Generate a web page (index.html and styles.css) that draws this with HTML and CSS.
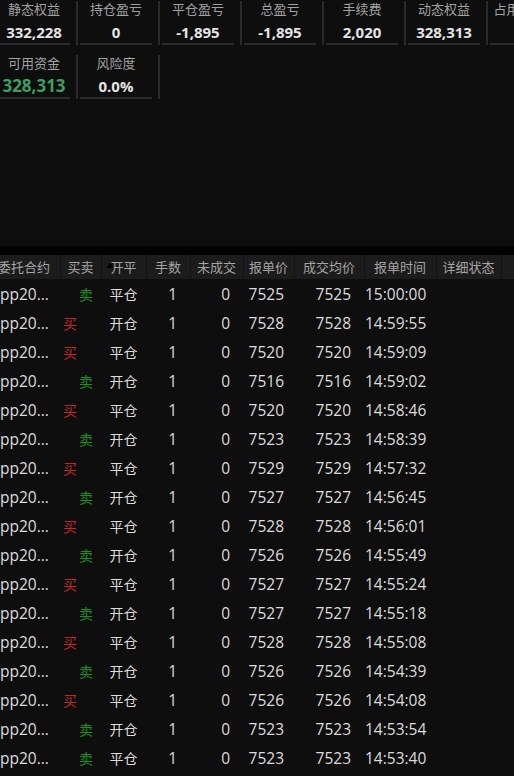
FILE: index.html
```html
<!DOCTYPE html>
<html lang="zh-CN">
<head>
    <meta charset="UTF-8">
    <meta name="viewport" content="width=device-width, initial-scale=1.0">
    <title>资金与委托</title>
    <link rel="stylesheet" href="styles.css">
</head>
<body>
    <div class="account">
        <div class="summary">
            <div class="cell"><div class="box"><div class="label">静态权益</div><div class="value">332,228</div></div></div>
            <div class="cell"><div class="box"><div class="label">持仓盈亏</div><div class="value">0</div></div></div>
            <div class="cell"><div class="box"><div class="label">平仓盈亏</div><div class="value">-1,895</div></div></div>
            <div class="cell"><div class="box"><div class="label">总盈亏</div><div class="value">-1,895</div></div></div>
            <div class="cell"><div class="box"><div class="label">手续费</div><div class="value">2,020</div></div></div>
            <div class="cell"><div class="box"><div class="label">动态权益</div><div class="value">328,313</div></div></div>
            <div class="cell"><div class="box"><div class="label">占用保证金</div><div class="value">0</div></div></div>
            <div class="cell"><div class="box"><div class="label">可用资金</div><div class="value big">328,313</div></div></div>
            <div class="cell"><div class="box"><div class="label">风险度</div><div class="value">0.0%</div></div></div>
        </div>
    </div>

    <div class="orders">
        <table class="order-table">
            <colgroup>
                <col style="width: 64px">
                <col style="width: 41px">
                <col style="width: 45px">
                <col style="width: 44px">
                <col style="width: 53px">
                <col style="width: 51px">
                <col style="width: 70px">
                <col style="width: 72px">
                <col style="width: 65px">
                <col style="width: 60px">
            </colgroup>
            <thead>
                <tr>
                    <th class="first">委托合约</th>
                    <th>买卖</th>
                    <th class="sorted">开平</th>
                    <th>手数</th>
                    <th>未成交</th>
                    <th>报单价</th>
                    <th>成交均价</th>
                    <th>报单时间</th>
                    <th>详细状态</th>
                    <th class="filler"></th>
                </tr>
            </thead>
            <tbody id="orderRows"></tbody>
        </table>
    </div>

    <script>
        // side, offset, price, time
        const orders = [
            ['卖', '平仓', 7525, '15:00:00'],
            ['买', '开仓', 7528, '14:59:55'],
            ['买', '平仓', 7520, '14:59:09'],
            ['卖', '开仓', 7516, '14:59:02'],
            ['买', '平仓', 7520, '14:58:46'],
            ['卖', '开仓', 7523, '14:58:39'],
            ['买', '平仓', 7529, '14:57:32'],
            ['卖', '开仓', 7527, '14:56:45'],
            ['买', '平仓', 7528, '14:56:01'],
            ['卖', '开仓', 7526, '14:55:49'],
            ['买', '平仓', 7527, '14:55:24'],
            ['卖', '开仓', 7527, '14:55:18'],
            ['买', '平仓', 7528, '14:55:08'],
            ['卖', '开仓', 7526, '14:54:39'],
            ['买', '平仓', 7526, '14:54:08'],
            ['卖', '开仓', 7523, '14:53:54'],
            ['卖', '平仓', 7523, '14:53:40']
        ];

        const tbody = document.getElementById('orderRows');
        orders.forEach(function(o) {
            const tr = document.createElement('tr');
            const sideClass = o[0] === '买' ? 'buy' : 'sell';
            tr.innerHTML =
                '<td class="symbol">pp20...</td>' +
                '<td class="side ' + sideClass + '"><span class="cn">' + o[0] + '</span></td>' +
                '<td class="offset"><span class="cn">' + o[1] + '</span></td>' +
                '<td class="num">1</td>' +
                '<td class="num">0</td>' +
                '<td class="num price">' + o[2] + '</td>' +
                '<td class="num">' + o[2] + '</td>' +
                '<td class="time">' + o[3] + '</td>' +
                '<td></td><td></td>';
            tbody.appendChild(tr);
        });
    </script>
</body>
</html>
```

FILE: styles.css
```css
html, body {
    margin: 0;
    padding: 0;
}
body {
    width: 514px;
    height: 776px;
    overflow: hidden;
    background: #0e0e0e;
    color: #dcdcdc;
    font-family: "Open Sans", "Noto Sans CJK SC", sans-serif;
}
.account {
    height: 246px;
    overflow: hidden;
}
.summary {
    display: grid;
    grid-template-columns: repeat(7, 80px);
    column-gap: 2px;
    row-gap: 10px;
    margin-left: -2px;
    padding-top: 1px;
    width: 600px;
}
.cell {
    height: 44px;
    padding-right: 6px;
    border-right: 2px solid #2a2a2a;
}
.box {
    width: 72px;
    height: 42px;
    border-bottom: 2px solid #2b2b2b;
    text-align: center;
    white-space: nowrap;
}
.label {
    font-family: "Noto Sans CJK SC", sans-serif;
    font-size: 13px;
    line-height: 15px;
    color: #a2a2a2;
}
.value {
    margin-top: 6px;
    font-size: 15px;
    font-weight: bold;
    line-height: 20px;
    color: #e4e4e4;
}
.value.big {
    font-size: 17px;
    color: #3c9f63;
}
.orders {
    border-top: 9px solid #030303;
}
.order-table {
    table-layout: fixed;
    border-collapse: collapse;
    margin-left: -4px;
    width: 565px;
}
.order-table th {
    height: 24px;
    padding: 0;
    background: #1c1c1c;
    border-right: 1px solid #121212;
    font-family: "Noto Sans CJK SC", sans-serif;
    font-size: 13px;
    font-weight: normal;
    line-height: 16px;
    color: #a4a4a4;
    text-align: center;
    white-space: nowrap;
    overflow: hidden;
}
.order-table th.first {
    text-align: left;
    padding-left: 2px;
}
.order-table th.sorted {
    position: relative;
}
.order-table th.sorted::before {
    content: "";
    position: absolute;
    left: 4px;
    top: 8px;
    border-left: 4px solid transparent;
    border-right: 4px solid transparent;
    border-bottom: 5px solid #050505;
}
.order-table td {
    height: 29px;
    padding: 0;
    font-size: 15.5px;
    color: #dcdcdc;
    white-space: nowrap;
    overflow: hidden;
}
.cn {
    font-family: "Noto Sans CJK SC", sans-serif;
    font-size: 14px;
}
.symbol {
    padding-left: 4px !important;
}
.side.buy {
    text-align: left;
    padding-left: 3px !important;
    color: #c4272b;
}
.side.sell {
    text-align: right;
    padding-right: 8px !important;
    color: #1f8f24;
}
.offset {
    text-align: center;
}
.num {
    text-align: right;
    padding-right: 13px !important;
}
.num.price {
    padding-right: 10px !important;
}
.time {
    padding-left: 1px !important;
}
```
